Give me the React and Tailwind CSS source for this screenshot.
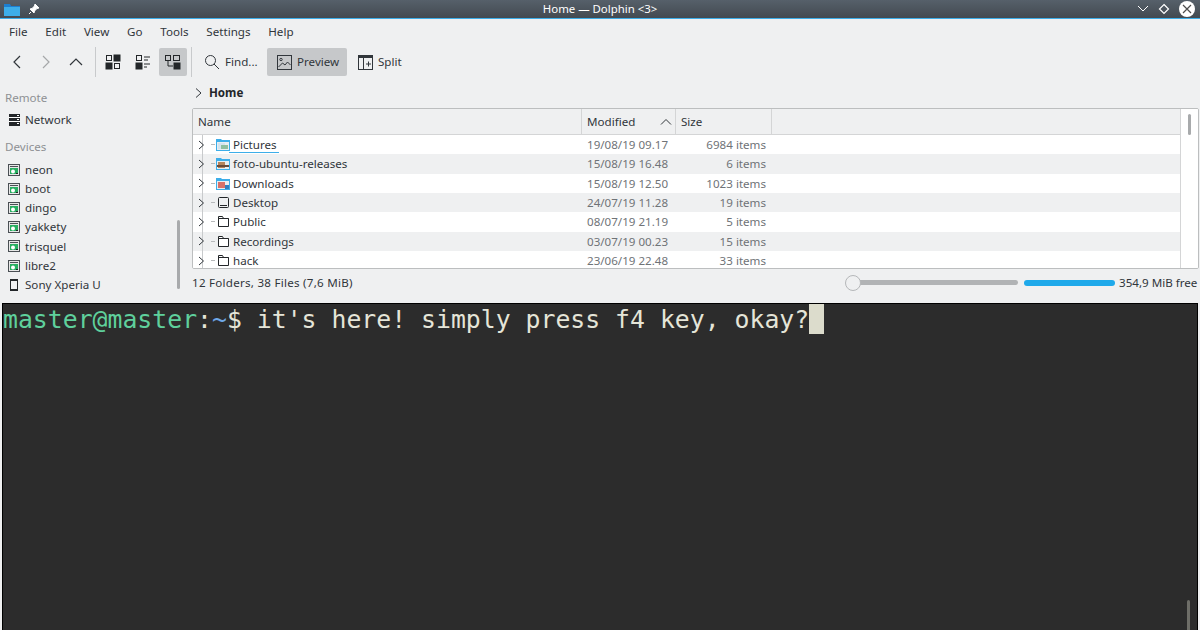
const ui = { fontFamily: '"Noto Sans", sans-serif' };

const menus = ['File', 'Edit', 'View', 'Go', 'Tools', 'Settings', 'Help'];

const places = ['neon', 'boot', 'dingo', 'yakkety', 'trisquel', 'libre2'];

const files = [
  { name: 'Pictures', date: '19/08/19 09.17', size: '6984 items', icon: 'pictures', hover: true },
  { name: 'foto-ubuntu-releases', date: '15/08/19 16.48', size: '6 items', icon: 'photos' },
  { name: 'Downloads', date: '15/08/19 12.50', size: '1023 items', icon: 'downloads' },
  { name: 'Desktop', date: '24/07/19 11.28', size: '19 items', icon: 'desktop' },
  { name: 'Public', date: '08/07/19 21.19', size: '5 items', icon: 'folder' },
  { name: 'Recordings', date: '03/07/19 00.23', size: '15 items', icon: 'folder' },
  { name: 'hack', date: '23/06/19 22.48', size: '33 items', icon: 'folder' },
];

function Chevron({ d, color = '#31363b', w = 1.2, size = 16 }) {
  return (
    <svg width={size} height={size} viewBox="0 0 16 16" fill="none" stroke={color} strokeWidth={w}>
      <path d={d} />
    </svg>
  );
}

function ViewIcon({ mode }) {
  if (mode === 'icons') {
    return (
      <svg width="16" height="16" viewBox="0 0 16 16" fill="none" stroke="#232629">
        <rect x="1.5" y="1.5" width="5" height="5" />
        <rect x="9" y="1" width="6" height="6" fill="#232629" />
        <rect x="1" y="9" width="6" height="6" fill="#232629" />
        <rect x="9.5" y="9.5" width="5" height="5" />
      </svg>
    );
  }
  if (mode === 'compact') {
    return (
      <svg width="16" height="16" viewBox="0 0 16 16" fill="none" stroke="#232629">
        <rect x="1.5" y="1.5" width="5" height="5" />
        <rect x="1" y="9" width="6" height="6" fill="#232629" />
        <path d="M9 3h6M9 6h4M9 10h6M9 13h3" />
      </svg>
    );
  }
  return (
    <svg width="16" height="16" viewBox="0 0 16 16" fill="none" stroke="#232629">
      <rect x="0.5" y="1.5" width="5" height="5" />
      <rect x="8.5" y="1.5" width="6" height="5" />
      <rect x="9" y="9" width="6" height="6" fill="#232629" />
      <path d="M3 7v5h5" />
    </svg>
  );
}

function DriveIcon() {
  return (
    <svg width="12" height="12" viewBox="0 0 12 12" className="shrink-0">
      <rect x="0.5" y="0.5" width="11" height="11" fill="#e8e8e8" stroke="#4a4f54" />
      <rect x="2" y="2" width="8" height="1" fill="#4a4f54" />
      <rect x="2" y="4" width="8" height="6" fill="#27ae60" />
      <circle cx="5" cy="7.500" r="2" fill="#fff" />
      <rect x="8" y="9" width="2" height="1" fill="#232629" />
    </svg>
  );
}

function FileIcon({ type }) {
  if (type === 'folder') {
    return (
      <svg width="13" height="13" viewBox="0 0 13 13" fill="none" stroke="#232629">
        <path d="M1.5 11.5v-10h4l1 2h5v8z" fill="#fff" />
        <path d="M1.5 3.5h10" />
      </svg>
    );
  }
  if (type === 'desktop') {
    return (
      <svg width="13" height="13" viewBox="0 0 13 13" fill="none" stroke="#232629">
        <rect x="1.5" y="1.5" width="10" height="10" rx="1" />
        <path d="M3 9.5h7" />
      </svg>
    );
  }
  const body = {
    pictures: '#d4e4ee',
    photos: '#b5845c',
    downloads: '#d7726a',
  }[type];
  return (
    <svg width="14" height="13" viewBox="0 0 14 13">
      <path d="M0 1h5l1 1h8v11H0z" fill="#3daee9" />
      <rect x="1" y="4" width="12" height="8" fill="#e8eef2" />
      <rect x="2" y="5" width="7" height="6" fill={body} />
      {type === 'photos' && <rect x="1" y="8" width="12" height="2" fill="#6b4a3a" />}
      {type === 'downloads' && <rect x="9" y="8" width="4" height="4" fill="#2f80c2" />}
      {type === 'pictures' && <rect x="5" y="7" width="7" height="4" fill="#8fbf9f" />}
    </svg>
  );
}

function Row({ file, odd }) {
  return (
    <div className={odd ? 'flex h-[19.33px] items-center bg-[#eff0f1]' : 'flex h-[19.33px] items-center bg-white'}>
      <div className="flex w-[389px] items-center">
        <div className="relative ml-[5px] flex h-[19.33px] w-[18px] items-center">
          <span className="absolute left-[4px] top-0 h-full w-px bg-[#c8cacc]" />
          <svg width="10" height="12" viewBox="0 0 10 12" fill="none" stroke="#31363b" className="relative">
            <path d="M1 2l4.5 4L1 10" />
          </svg>
          <span className="absolute left-[13px] top-[9px] h-px w-[4px] bg-[#b8babc]" />
        </div>
        <div className="flex w-[14px] justify-center">
          <FileIcon type={file.icon} />
        </div>
        <div className="relative ml-[3px]">
          <span className="text-[#31363b]">{file.name}</span>
          {file.hover && <span className="absolute -left-[4px] right-[-2px] bottom-0 h-px bg-[#3daee9]" />}
        </div>
      </div>
      <div className="w-[94px] whitespace-nowrap pl-[5px] text-[#6f7377]">{file.date}</div>
      <div className="w-[90px] whitespace-nowrap text-right text-[#6f7377]">{file.size}</div>
    </div>
  );
}

export default function App() {
  return (
    <div className="flex h-[630px] w-[1200px] flex-col overflow-hidden bg-[#eff0f1] text-[11.6px] text-[#31363b]" style={ui}>
      {/* window title bar */}
      <div className="relative flex h-[19px] shrink-0 items-center justify-between border-b border-[#3daee9] bg-gradient-to-b from-[#56606a] to-[#434a51] pl-[4px] pr-[5px]">
        <div className="flex items-center gap-[8px]">
          <svg width="16" height="13" viewBox="0 0 16 13">
            <path d="M0 1h6l1 2h9v10H0z" fill="#1d7fd0" />
            <rect x="0" y="4" width="16" height="9" fill="#3daee9" />
          </svg>
          <svg width="12" height="12" viewBox="0 0 12 12" fill="#fff" stroke="#fff">
            <path d="M7 1l4 4-2 0.5-2.5 2.5-0.5 2-4-4 2-0.5L6.500 3z" />
            <path d="M3 9L1 11" />
          </svg>
        </div>
        <span className="absolute left-0 right-0 text-center text-[11.4px] text-white">Home — Dolphin &lt;3&gt;</span>
        <div className="relative flex items-center gap-[9px]">
          <svg width="12" height="10" viewBox="0 0 12 10" fill="none" stroke="#fff">
            <path d="M1 2l5 5 5-5" />
          </svg>
          <svg width="12" height="12" viewBox="0 0 12 12" fill="none" stroke="#fff" strokeWidth="1.2">
            <path d="M6 1.500L10.500 6 6 10.500 1.500 6z" />
          </svg>
          <span className="flex h-[16px] w-[16px] items-center justify-center rounded-full bg-white">
            <svg width="10" height="10" viewBox="0 0 10 10" fill="none" stroke="#4d4d4d" strokeWidth="1.2">
              <path d="M1 1l8 8M9 1l-8 8" />
            </svg>
          </span>
        </div>
      </div>

      {/* menu bar */}
      <div className="flex h-[28px] shrink-0 items-center gap-[17.8px] pb-[2px] pl-[9px]">
        {menus.map((m) => (
          <span key={m}>{m}</span>
        ))}
      </div>

      {/* toolbar */}
      <div className="flex h-[30px] shrink-0 items-center pl-[9px]">
        <div className="flex w-[16px] justify-center"><Chevron d="M11 2L5 8l6 6" /></div>
        <div className="ml-[13px] flex w-[16px] justify-center"><Chevron d="M5 2l6 6-6 6" color="#a5a7a9" /></div>
        <div className="ml-[14px] flex w-[16px] justify-center"><Chevron d="M2 11l6-6 6 6" /></div>
        <span className="ml-[11px] h-[30px] w-px bg-[#c8cacc]" />
        <div className="ml-[9px] flex w-[16px]"><ViewIcon mode="icons" /></div>
        <div className="ml-[14px] flex w-[16px]"><ViewIcon mode="compact" /></div>
        <div className="ml-[8px] flex h-[28px] w-[28px] items-center justify-center rounded-[2px] bg-[#c6c8ca]"><ViewIcon mode="details" /></div>
        <span className="ml-[4px] h-[30px] w-px bg-[#c8cacc]" />
        <svg width="16" height="16" viewBox="0 0 16 16" fill="none" stroke="#31363b" className="ml-[12px]">
          <circle cx="6.500" cy="6.500" r="5" />
          <path d="M10 10l5 5" />
        </svg>
        <span className="ml-[5px] w-[33px] whitespace-nowrap">Find...</span>
        <div className="ml-[9px] flex h-[28px] w-[80px] items-center rounded-[2px] bg-[#c6c8ca] pl-[10px]">
          <svg width="15" height="15" viewBox="0 0 15 15" fill="none" stroke="#31363b">
            <rect x="0.500" y="0.500" width="14" height="14" />
            <circle cx="4" cy="4.500" r="1.200" />
            <path d="M1.500 12l4-4 2.500 2 2.500-3 3 3" />
          </svg>
          <span className="ml-[5px]">Preview</span>
        </div>
        <svg width="15" height="15" viewBox="0 0 15 15" fill="none" stroke="#31363b" className="ml-[11px]">
          <rect x="0.500" y="0.500" width="14" height="14" />
          <rect x="0" y="0" width="15" height="3" fill="#31363b" stroke="none" />
          <path d="M5.500 3v12M8 9h5M10.500 6.500v5" />
        </svg>
        <span className="ml-[5px]">Split</span>
      </div>

      {/* places + file view */}
      <div className="flex h-[226px] shrink-0">
        <aside className="flex w-[192px] shrink-0">
          <div className="w-[177px] pt-[13px]">
            <div className="h-[16px] pl-[5px] leading-[16px] text-[#8e9194]">Remote</div>
            <div className="mt-[4px] flex h-[19px] items-center gap-[5px] pl-[9px]">
              <svg width="11" height="12" viewBox="0 0 11 12" className="shrink-0">
                <rect x="0" y="0" width="11" height="12" fill="#232629" />
                <path d="M0 3.500h11M0 7.500h11" stroke="#fff" />
                <path d="M8 1.500h2M8 5.500h2M8 9.500h2" stroke="#fff" />
              </svg>
              <span>Network</span>
            </div>
            <div className="mt-[10px] h-[16px] pl-[5px] leading-[16px] text-[#8e9194]">Devices</div>
            <div className="mt-[5px]">
              {places.map((p) => (
                <div key={p} className="flex h-[19.2px] items-center gap-[5px] pl-[8px]">
                  <DriveIcon />
                  <span>{p}</span>
                </div>
              ))}
              <div className="flex h-[19.2px] items-center gap-[5px] pl-[8px]">
                <svg width="12" height="12" viewBox="0 0 12 12" fill="none" stroke="#232629" className="shrink-0">
                  <rect x="2.500" y="0.500" width="7" height="11" />
                  <path d="M2.500 1.500h7M2.500 10.500h7" />
                </svg>
                <span>Sony Xperia U</span>
              </div>
            </div>
          </div>
          <div className="flex w-[4px] flex-col justify-end pb-[14px]">
            <div className="h-[69px] w-[3px] rounded-full bg-[#a8aaac]" />
          </div>
        </aside>

        <div className="flex min-w-0 flex-1 flex-col pr-px">
          <div className="flex h-[31px] shrink-0 items-center">
            <svg width="12" height="12" viewBox="0 0 12 12" fill="none" stroke="#31363b" className="ml-[1px]">
              <path d="M3 1.500L8 6l-5 4.500" />
            </svg>
            <span className="ml-[4px] font-bold text-[#232629]">Home</span>
          </div>

          <div className="flex h-[161px] shrink-0 overflow-hidden rounded-[2px] border border-[#bcbebf] bg-white">
            <div className="min-w-0 flex-1">
              <div className="flex h-[26px] items-center border-b border-[#d4d5d6] bg-[#eff0f1]">
                <div className="flex h-full w-[389px] items-center border-r border-[#d4d5d6] pl-[5px]">Name</div>
                <div className="flex h-full w-[94px] items-center justify-between border-r border-[#d4d5d6] pl-[5px] pr-[3px]">
                  <span>Modified</span>
                  <svg width="12" height="8" viewBox="0 0 12 8" fill="none" stroke="#31363b">
                    <path d="M1 6.500L6 1.500l5 5" />
                  </svg>
                </div>
                <div className="flex h-full w-[96px] items-center border-r border-[#d4d5d6] pl-[5px]">Size</div>
              </div>
              {files.map((f, i) => (
                <Row key={f.name} file={f} odd={i % 2 === 1} />
              ))}
            </div>
            <div className="flex w-[18px] shrink-0 justify-center border-l border-[#d4d5d6] bg-white pt-[5px]">
              <div className="h-[21px] w-[3px] rounded-full bg-[#a8aaac]" />
            </div>
          </div>

          <div className="flex flex-1 items-center pb-[6px]">
            <span className="tracking-[0.25px]">12 Folders, 38 Files (7,6 MiB)</span>
            <div className="ml-auto flex items-center">
              <div className="flex w-[173px] items-center">
                <span className="z-10 h-[16px] w-[16px] shrink-0 rounded-full border border-[#b5b7b9] bg-[#eff0f1]" />
                <span className="-ml-px h-[5px] flex-1 rounded-r-full bg-[#b1b3b5]" />
              </div>
              <div className="ml-[6px] h-[6px] w-[91px] rounded-full bg-[#1fa9ea]" />
              <span className="ml-[4px] w-[80px] whitespace-nowrap">354,9 MiB free</span>
            </div>
          </div>
        </div>
      </div>

      {/* embedded terminal */}
      <div className="mx-[2px] flex min-h-0 flex-1 justify-between border-x border-t border-black bg-[#2c2c2c] font-['DejaVu_Sans_Mono',monospace] text-[24.8px] leading-[30px]">
        <div className="flex h-[31px] items-start whitespace-pre pt-px">
          <span className="text-[#5fd09c]">master@master</span>
          <span className="text-[#e5e5d8]">:</span>
          <span className="text-[#6fa8e8]">~</span>
          <span className="text-[#e5e5d8]">$ it's here! simply press f4 key, okay?</span>
          <span className="-mt-px h-[30px] w-[15px] bg-[#dcdccc]" />
        </div>
        <div className="flex flex-col justify-end pr-[7px]">
          <div className="h-[30px] w-[3px] rounded-t-full bg-[#6e6e68]" />
        </div>
      </div>
    </div>
  );
}
